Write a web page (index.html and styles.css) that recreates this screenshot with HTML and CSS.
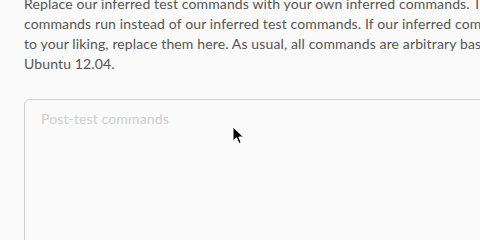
FILE: index.html
```html
<!DOCTYPE html>
<html lang="en">
  <head>
    <meta charset="UTF-8" />
    <meta name="viewport" content="width=device-width, initial-scale=1.0" />
    <title>Post-test commands</title>
    <link rel="stylesheet" href="styles.css">
  </head>
  <body>
    <div class="settings-section">
      <p class="section-help">
        Replace our inferred test commands with your own inferred commands. These<br />
        commands run instead of our inferred test commands. If our inferred commands are not<br />
        to your liking, replace them here. As usual, all commands are arbitrary bash statements, and run on<br />
        Ubuntu 12.04.
      </p>
      <textarea class="commands" placeholder="Post-test commands"></textarea>
    </div>

    <svg class="mouse-pointer" width="14" height="20" viewBox="0 0 14 20">
      <path d="M1 1 L1 15 L4.5 11.8 L7 17.5 L9.2 16.5 L6.8 11 L11.5 11 Z" fill="#000" stroke="#fff" stroke-width="1" />
    </svg>
  </body>
</html>
```

FILE: styles.css
```css
/* styles.css */
html,
body {
  margin: 0;
  height: 100%;
  overflow: hidden;
  background-color: #fafafa;
}

body {
  font-family: Lato, "Open Sans", Arial, sans-serif;
  color: #555;
}

.settings-section {
  padding: 0 24px;
  margin-top: -6px;
}

.section-help {
  margin: 0;
  font-size: 14px;
  line-height: 20px;
  letter-spacing: 0.13px;
  white-space: nowrap;
}

.commands {
  display: block;
  margin-top: 25px;
  width: 600px;
  height: 200px;
  box-sizing: border-box;
  padding: 9px 16px;
  border: 1px solid #d0d0d0;
  border-radius: 6px;
  background-color: #fafafa;
  font-family: Lato, "Open Sans", Arial, sans-serif;
  font-size: 14px;
  line-height: 20px;
  letter-spacing: 0.13px;
  color: #555;
  resize: none;
  outline: none;
}

.commands::placeholder {
  color: #cfcfcf;
}

.mouse-pointer {
  position: absolute;
  left: 232px;
  top: 126px;
}
```
